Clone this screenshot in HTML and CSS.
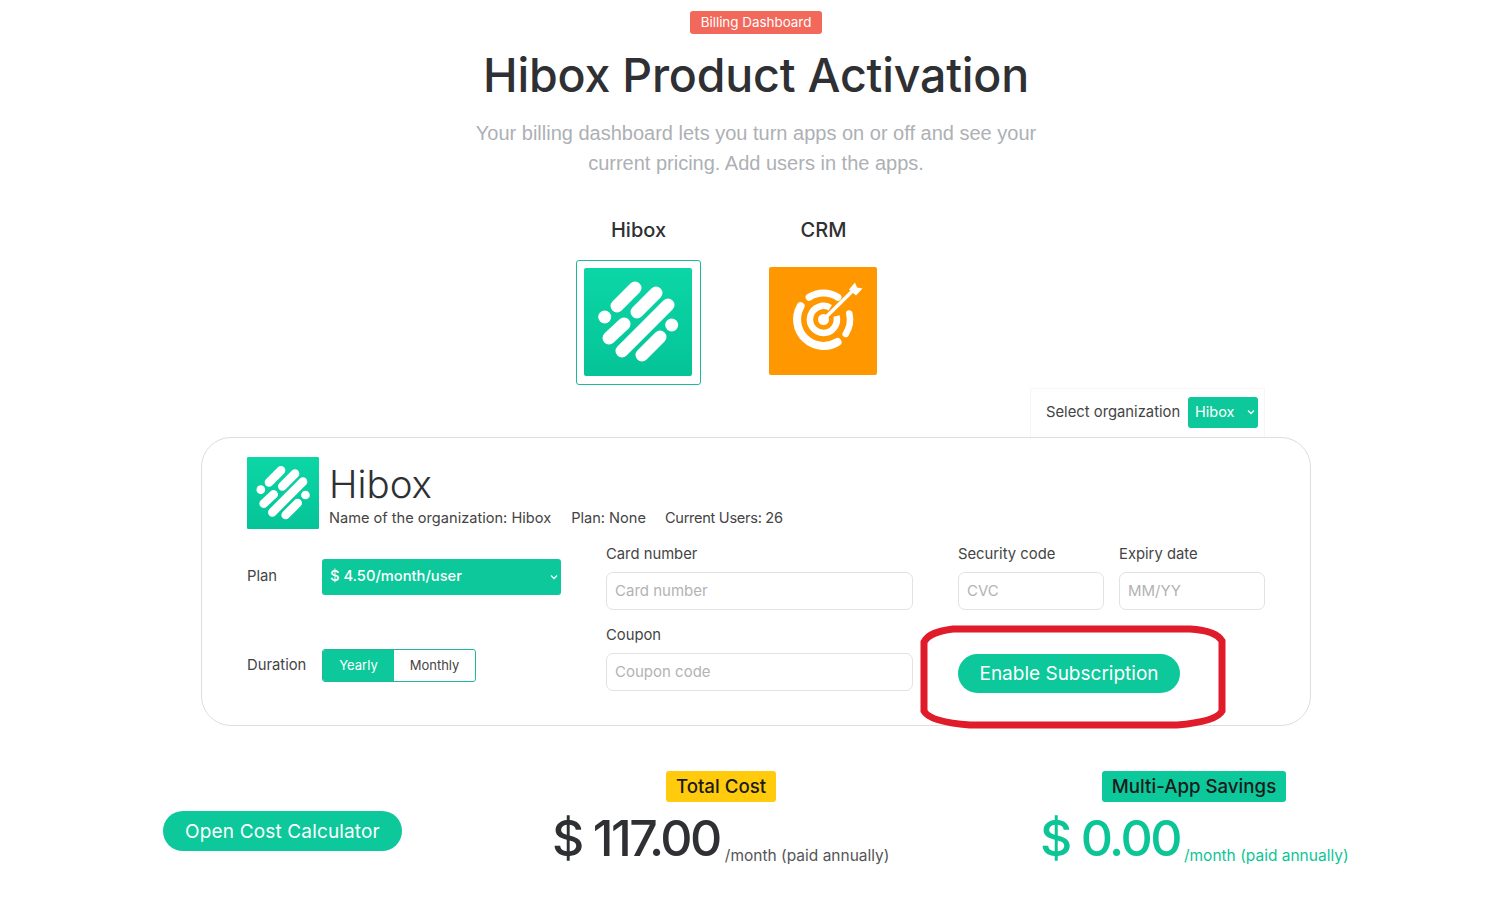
FILE: index.html
```html
<!DOCTYPE html>
<html lang="en">
<head>
    <meta charset="UTF-8">
    <meta name="viewport" content="width=device-width, initial-scale=1.0">
    <title>Hibox Product Activation</title>
    <link rel="stylesheet" href="styles.css">
</head>
<body>
    <!-- Page heading -->
    <header class="page-head">
        <span class="head-badge">Billing Dashboard</span>
        <h1>Hibox Product Activation</h1>
        <p>Your billing dashboard lets you turn apps on or off and see your<br>current pricing. Add users in the apps.</p>
    </header>

    <!-- App picker -->
    <section class="app-tabs">
        <div class="app-tab active">
            <h3>Hibox</h3>
            <div class="app-frame">
                <svg class="app-icon" viewBox="0 0 108 108">
                    <defs>
                        <linearGradient id="hibox-bg" x1="0" y1="0" x2="0" y2="1">
                            <stop offset="0" stop-color="#0cd6a6"/>
                            <stop offset="1" stop-color="#05c497"/>
                        </linearGradient>
                    </defs>
                    <rect width="108" height="108" rx="2" fill="url(#hibox-bg)"/>
                    <g stroke="#fff" stroke-width="13" stroke-linecap="round">
                        <path d="M33 38 51 20"/>
                        <path d="M53 44 72 25"/>
                        <path d="M38 83 84 37"/>
                        <path d="M25 70 40 56"/>
                        <path d="M58 87 76 69"/>
                    </g>
                    <circle cx="20.700" cy="49" r="6.500" fill="#fff"/>
                    <circle cx="87.700" cy="57" r="6.500" fill="#fff"/>
                </svg>
            </div>
        </div>
        <div class="app-tab">
            <h3>CRM</h3>
            <div class="app-frame">
                <svg class="app-icon" viewBox="0 0 108 108">
                    <rect width="108" height="108" rx="2" fill="#ff9800"/>
                    <g transform="translate(1 0.500)">
                        <g fill="none" stroke="#fff" stroke-linecap="round">
                            <path d="M39.100 29.800A26.500 26.500 0 0 1 67.900 29.800" stroke-width="7"/>
                            <path d="M30.600 38.750A26.500 26.500 0 0 0 67.500 74.500" stroke-width="8"/>
                            <path d="M79.300 46A26.500 26.500 0 0 1 75.700 66.400" stroke-width="6.500"/>
                            <path d="M60.300 40.300A13.500 13.500 0 1 0 66.500 48.500" stroke-width="6.500" stroke-linecap="butt"/>
                            <path d="M53.500 52 83 23" stroke-width="3.500"/>
                        </g>
                        <circle cx="53.500" cy="52" r="5.500" fill="#fff"/>
                        <path d="M79 22 85 15 87 20 92.500 21 86 28Z" fill="#fff"/>
                    </g>
                </svg>
            </div>
        </div>
    </section>

    <!-- Organization select sits on top of the card -->
    <div class="org-row">
        <div class="org-select">
            <label>Select organization</label>
            <select class="green-select">
                <option>Hibox</option>
            </select>
        </div>
    </div>

    <section class="plan-card">
        <div class="card-head">
            <svg class="card-logo" viewBox="0 0 108 108">
                <rect width="108" height="108" rx="2" fill="url(#hibox-bg)"/>
                <g stroke="#fff" stroke-width="13" stroke-linecap="round">
                    <path d="M33 38 51 20"/>
                    <path d="M53 44 72 25"/>
                    <path d="M38 83 84 37"/>
                    <path d="M25 70 40 56"/>
                    <path d="M58 87 76 69"/>
                </g>
                <circle cx="20.700" cy="49" r="6.500" fill="#fff"/>
                <circle cx="87.700" cy="57" r="6.500" fill="#fff"/>
            </svg>
            <div>
                <h2>Hibox</h2>
                <div class="card-meta">
                    <span>Name of the organization: Hibox</span>
                    <span>Plan: None</span>
                    <span class="users-count">Current Users: 26</span>
                </div>
            </div>
        </div>

        <div class="card-body">
            <div class="plan-col">
                <div class="plan-row">
                    <label>Plan</label>
                    <select class="green-select plan-select">
                        <option>$ 4.50/month/user</option>
                    </select>
                </div>
                <div class="plan-row duration-row">
                    <label>Duration</label>
                    <div class="toggle">
                        <button class="on">Yearly</button>
                        <button>Monthly</button>
                    </div>
                </div>
            </div>

            <div class="pay-grid">
                <div class="field">
                    <label>Card number</label>
                    <input type="text" placeholder="Card number">
                </div>
                <div class="field">
                    <label>Security code</label>
                    <input type="text" placeholder="CVC">
                </div>
                <div class="field">
                    <label>Expiry date</label>
                    <input type="text" placeholder="MM/YY">
                </div>
                <div class="field">
                    <label>Coupon</label>
                    <input type="text" placeholder="Coupon code">
                </div>
                <div class="enable-cell">
                    <button class="pill enable-btn">Enable Subscription</button>
                    <!-- Red marker ring drawn over the button -->
                    <svg class="marker-ring" viewBox="0 0 306 104">
                        <path d="M33 4H270C288 5 298 9 302 16V86C298 94 280 98 257 100H50C25 98 8 94 4 86V17C8 9 18 6 33 4Z" fill="none" stroke="#e01b2a" stroke-width="7"/>
                    </svg>
                </div>
            </div>
        </div>
    </section>

    <!-- Totals -->
    <section class="totals">
        <button class="pill calc-btn">Open Cost Calculator</button>
        <div class="total-col">
            <span class="total-badge yellow">Total Cost</span>
            <div class="total-line">
                <strong>$ 117.00</strong>
                <small>/month (paid annually)</small>
            </div>
        </div>
        <div class="total-col savings">
            <span class="total-badge green">Multi-App Savings</span>
            <div class="total-line">
                <strong>$ 0.00</strong>
                <small>/month (paid annually)</small>
            </div>
        </div>
    </section>
</body>
</html>
```

FILE: styles.css
```css
/* General page styling */
body {
    margin: 0;
    height: 912px;
    overflow: hidden;
    background: #fff;
    color: #2f3033;
    font-family: Inter, "Open Sans", sans-serif;
}

label {
    color: #444;
    font-size: 14.8px;
}

/* Heading */
.page-head {
    padding-top: 11px;
    text-align: center;
}

.head-badge {
    display: block;
    width: 132px;
    height: 23px;
    margin: 0 auto;
    background: #f2695c;
    border-radius: 3px;
    color: #fff;
    font-size: 13.4px;
    line-height: 23px;
}

.page-head h1 {
    margin: 10px 0 0;
    font-size: 46.500px;
    font-weight: 500;
    line-height: 62px;
    letter-spacing: -0.2px;
}

.page-head p {
    margin: 12px 0 0;
    color: #adb0b5;
    font-family: "Liberation Sans", Arial, sans-serif;
    font-size: 20px;
    line-height: 30px;
}

/* App picker */
.app-tabs {
    display: flex;
    gap: 60px;
    box-sizing: border-box;
    width: 1110px;
    margin: 37px auto 0;
    padding-left: 375px;
}

.app-tab {
    width: 125px;
    text-align: center;
}

.app-tab h3 {
    margin: 0 0 15px;
    font-size: 20px;
    font-weight: 500;
    line-height: 30px;
}

.app-frame {
    box-sizing: border-box;
    width: 125px;
    height: 125px;
    padding: 7px;
    border: 1px solid transparent;
    border-radius: 3px;
}

.app-tab.active .app-frame {
    border-color: #20b89a;
}

.app-tab:not(.active) .app-icon {
    margin-top: -1px;
}

.app-icon {
    display: block;
    width: 108px;
    height: 108px;
}

/* Organization select */
.org-row {
    display: flex;
    justify-content: flex-end;
    box-sizing: border-box;
    width: 1110px;
    margin: 3px auto 0;
    padding-right: 46px;
}

.org-select {
    display: flex;
    align-items: center;
    justify-content: space-between;
    box-sizing: border-box;
    width: 235px;
    height: 49px;
    padding: 0 6px 2px 15px;
    border: 1px solid #f6f6f6;
    border-bottom: none;
}

.green-select {
    appearance: none;
    box-sizing: border-box;
    width: 70px;
    height: 31px;
    padding: 0 7px 2px;
    background-color: #0cc89a;
    background-image: url("data:image/svg+xml,%3Csvg xmlns='http://www.w3.org/2000/svg' width='8' height='6'%3E%3Cpath d='M1 1.500 4 4.500 7 1.500' fill='none' stroke='%23fff' stroke-width='1.300'/%3E%3C/svg%3E");
    background-repeat: no-repeat;
    background-position: right 3px center;
    border: none;
    border-radius: 3px;
    color: #fff;
    font-family: inherit;
    font-size: 14.5px;
}

/* Main card */
.plan-card {
    box-sizing: border-box;
    width: 1110px;
    height: 289px;
    margin: 0 auto;
    padding: 19px 45px 0;
    border: 1px solid #ddd;
    border-radius: 30px;
}

.card-head {
    display: flex;
    gap: 10px;
}

.card-logo {
    display: block;
    width: 72px;
    height: 72px;
}

.card-head h2 {
    margin: 3px 0 1px;
    font-size: 38.500px;
    font-weight: 300;
    line-height: 48px;
}

.card-meta {
    display: flex;
    gap: 20px;
    color: #444;
    font-size: 14.6px;
    line-height: 18px;
}

.users-count {
    margin-left: -1px;
    letter-spacing: -0.3px;
}

.card-body {
    display: flex;
    gap: 45px;
}

.plan-col {
    width: 314px;
    padding-top: 30px;
}

.plan-row {
    display: flex;
    align-items: center;
}

.plan-row label {
    width: 75px;
    padding-bottom: 2px;
}

.plan-select {
    width: 239px;
    height: 36px;
    padding: 0 8px 2px;
    font-size: 14.700px;
    font-weight: 500;
}

.duration-row {
    margin-top: 54px;
}

.toggle {
    display: flex;
    box-sizing: border-box;
    width: 154px;
    height: 33px;
    border: 1px solid #20b89a;
    border-radius: 3px;
}

.toggle button {
    flex: 1;
    padding: 0 0 2px;
    background: #fff;
    border: none;
    border-radius: 0 3px 3px 0;
    color: #444;
    font-family: inherit;
    font-size: 13px;
}

.toggle button.on {
    flex: 0 0 71px;
    background: #0cc89a;
    border-radius: 2px 0 0 2px;
    color: #fff;
}

/* Payment fields */
.pay-grid {
    display: grid;
    flex: 0 0 auto;
    grid-template-columns: 352px 161px 146px;
    row-gap: 16px;
    margin-top: 16px;
}

.field {
    display: flex;
    flex-direction: column;
    gap: 9px;
}

.field label {
    line-height: 18px;
}

.field input {
    box-sizing: border-box;
    height: 38px;
    padding: 0 8px 2px;
    border: 1px solid #e2e2e2;
    border-radius: 7px;
    color: #444;
    font-family: inherit;
    font-size: 15px;
}

.field:nth-child(1) input,
.field:nth-child(4) input {
    width: 307px;
}

.field:nth-child(2) input {
    width: 146px;
}

.field input::placeholder {
    color: #b3b3b3;
}

.enable-cell {
    position: relative;
    grid-column: span 2;
    padding-top: 28px;
}

.pill {
    padding: 0;
    background: #0cc89a;
    border: none;
    border-radius: 20px;
    color: #fff;
    font-family: inherit;
    font-size: 19px;
}

.enable-btn {
    display: block;
    width: 222px;
    height: 39px;
}

.marker-ring {
    position: absolute;
    left: -38px;
    top: -1px;
    width: 306px;
    height: 104px;
}

/* Totals */
.totals {
    display: flex;
    justify-content: center;
    gap: 150px;
    margin-top: 45px;
    padding-right: 1px;
}

.calc-btn {
    width: 239px;
    height: 40px;
    margin-top: 40px;
    letter-spacing: 0.15px;
}

.total-col {
    display: flex;
    flex-direction: column;
    align-items: center;
    width: 338px;
}

.savings {
    width: 308px;
}

.total-badge {
    height: 31px;
    padding: 0 10px;
    border-radius: 3px;
    color: #1b1b1b;
    font-size: 18.700px;
    font-weight: 500;
    line-height: 31px;
}

.total-badge.yellow {
    background: #ffcb0c;
}

.total-badge.green {
    background: #0cc89a;
}

.total-line {
    display: flex;
    align-items: flex-end;
    gap: 5px;
    width: 100%;
    margin-top: 4px;
}

.total-line strong {
    font-size: 50px;
    font-weight: 500;
    line-height: 64px;
    letter-spacing: -2.5px;
    white-space: nowrap;
}

.total-line small {
    margin-bottom: 5px;
    color: #555;
    font-size: 15.500px;
    line-height: 18px;
    white-space: nowrap;
}

.savings .total-line {
    gap: 4px;
}

.savings strong,
.savings small {
    color: #0cc596;
}
```
